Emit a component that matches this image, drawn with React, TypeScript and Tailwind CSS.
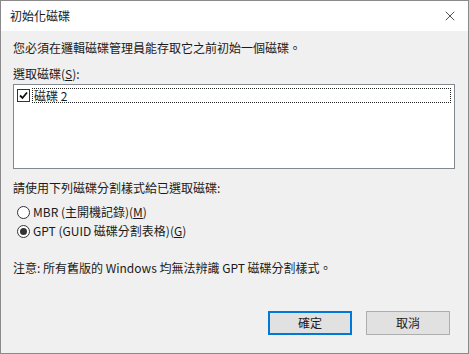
import { X } from "lucide-react";

const font = { fontFamily: '"Segoe UI", "Noto Sans CJK TC", "Noto Sans", sans-serif' };

function Radio({ checked }: { checked: boolean }) {
  return (
    <span className="relative w-[13px] h-[13px] rounded-full border border-[#333] bg-white flex items-center justify-center shrink-0">
      {checked && <span className="w-[7px] h-[7px] rounded-full bg-[#333]" />}
    </span>
  );
}

export default function App() {
  return (
    <div
      className="w-[469px] h-[354px] bg-[#f0f0f0] border border-[#8a8a8a] flex flex-col text-[12px] text-[#1a1a1a] overflow-hidden"
      style={font}
    >
      <div className="h-[30px] bg-white flex items-center justify-between pl-[9px] pr-[10px] shrink-0">
        <span>初始化磁碟</span>
        <X size={16} strokeWidth={1.2} className="text-[#222]" />
      </div>

      <div className="flex-1 flex flex-col px-[12px] pt-[8px]">
        <p className="leading-[18px]">您必須在邏輯磁碟管理員能存取它之前初始一個磁碟。</p>
        <p className="leading-[18px] mt-[8px]">
          選取磁碟(<span className="underline">S</span>):
        </p>
        <div className="mt-[1px] h-[85px] w-[442px] bg-white border border-[#828790] p-[3px]">
          <div className="flex items-center gap-[2px] h-[15px]">
            <span className="w-[13px] h-[13px] border border-[#333] bg-white flex items-center justify-center shrink-0">
              <svg width="9" height="9" viewBox="0 0 9 9">
                <path d="M1 4.5 L3.5 7 L8 1.5" fill="none" stroke="#111" strokeWidth="1.8" />
              </svg>
            </span>
            <span className="flex-1 border border-dotted border-[#222] leading-[13px] pl-[1px]">磁碟 2</span>
          </div>
        </div>

        <p className="leading-[18px] mt-[10px]">請使用下列磁碟分割樣式給已選取磁碟:</p>
        <div className="mt-[6px] flex flex-col gap-[1px] pl-[4px]">
          <label className="flex items-center gap-[3px] h-[18px]">
            <Radio checked={false} />
            <span>
              MBR (主開機記錄)(<span className="underline">M</span>)
            </span>
          </label>
          <label className="flex items-center gap-[3px] h-[18px]">
            <Radio checked />
            <span>
              GPT (GUID 磁碟分割表格)(<span className="underline">G</span>)
            </span>
          </label>
        </div>

        <p className="leading-[18px] mt-[19px]">注意: 所有舊版的 Windows 均無法辨識 GPT 磁碟分割樣式。</p>

        <div className="mt-auto mb-[18px] flex justify-end gap-[14px] pr-[6px]">
          <button className="w-[84px] h-[24px] bg-[#e1e1e1] border-2 border-[#0078d7] flex items-center justify-center">
            確定
          </button>
          <button className="w-[84px] h-[24px] bg-[#e1e1e1] border border-[#adadad] flex items-center justify-center">
            取消
          </button>
        </div>
      </div>
    </div>
  );
}
